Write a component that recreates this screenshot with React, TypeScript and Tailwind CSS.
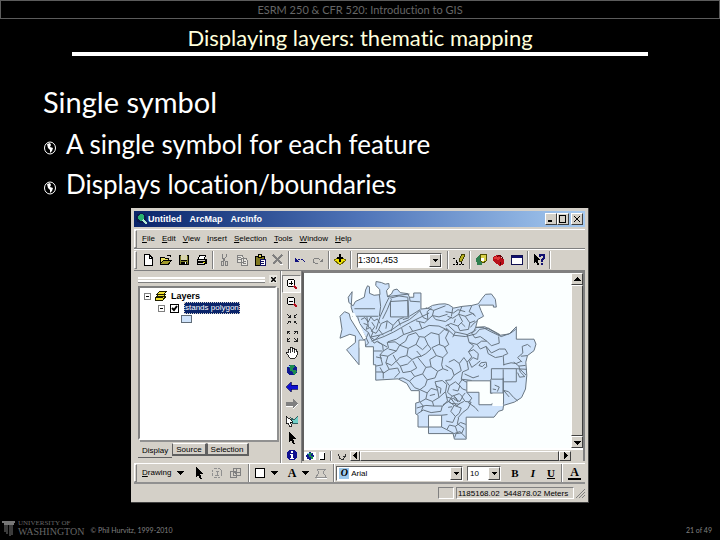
import React from "react";

type IconProps = { children: React.ReactNode; size?: string };

function Icon({ children, size = "w-3 h-3" }: IconProps) {
  return (
    <svg viewBox="0 0 12 12" className={`${size} shrink-0`} fill="none" shapeRendering="crispEdges" aria-hidden="true">
      {children}
    </svg>
  );
}

function Tool({ label, children }: { label: string; children: React.ReactNode }) {
  return (
    <button type="button" aria-label={label} className="flex h-[18px] w-[18px] shrink-0 items-center justify-center">
      <Icon>{children}</Icon>
    </button>
  );
}

function Separator() {
  return <div className="mx-px h-[18px] w-[2px] shrink-0 border-l border-r border-l-[#808080] border-r-white" />;
}

function Grip() {
  return <div className="mr-[2px] h-[18px] w-[3px] shrink-0 border border-white border-r-[#808080] border-b-[#808080]" />;
}

function Caret({ label }: { label: string }) {
  return (
    <button type="button" aria-label={label} className="flex h-[18px] w-3 shrink-0 items-center justify-center">
      <svg viewBox="0 0 7 4" className="h-1 w-[7px]" shapeRendering="crispEdges">
        <path d="M0 0H7L3.5 4Z" fill="#000" />
      </svg>
    </button>
  );
}

type ComboProps = { label: string; value: string; width: string; text: string };

function Combo({ label, value, width, text }: ComboProps) {
  return (
    <div className={`relative h-[15px] shrink-0 border border-[#606060] border-r-white border-b-white bg-white ${width}`}>
      <select aria-label={label} className={`block h-[13px] w-full appearance-none leading-[13px] text-black outline-none ${text}`}>
        <option>{value}</option>
      </select>
      <span className="pointer-events-none absolute top-0 right-0 flex h-[13px] w-3 items-center justify-center border border-white border-r-[#404040] border-b-[#404040] bg-[#d4d0c8]">
        <svg viewBox="0 0 5 3" className="h-[3px] w-[5px]" shapeRendering="crispEdges">
          <path d="M0 0H5L2.5 3Z" fill="#000" />
        </svg>
      </span>
    </div>
  );
}

function WindowButton({ label, d }: { label: string; d: string }) {
  return (
    <button
      type="button"
      aria-label={label}
      className="flex h-3 w-3 items-center justify-center border border-white border-r-[#404040] border-b-[#404040] bg-[#d4d0c8]"
    >
      <svg viewBox="0 0 8 8" className="h-2 w-2" fill="none" stroke="#000" shapeRendering="crispEdges">
        <path d={d} />
      </svg>
    </button>
  );
}

function ArrowButton({ label, d, size }: { label: string; d: string; size: string }) {
  return (
    <button
      type="button"
      aria-label={label}
      className={`flex shrink-0 items-center justify-center border border-white border-r-[#404040] border-b-[#404040] bg-[#d4d0c8] ${size}`}
    >
      <svg viewBox="0 0 7 7" className="h-[7px] w-[7px]" shapeRendering="crispEdges">
        <path d={d} fill="#000" />
      </svg>
    </button>
  );
}

function Globe() {
  return (
    <>
      <circle cx="6" cy="6" r="5.5" fill="#101a90" />
      <path d="M4 1h4l1 2-2 1v2h2l2 1-1 3-2 1-1-3-3-1V4L2 3z" fill="#1c8a50" />
      <path d="M2 2h2v1H2z" fill="#8fd0ff" />
    </>
  );
}

function Pointer() {
  return <path d="M3 0v10l2-2 2 4h2L7 7h3z" fill="#000" />;
}

function TitleBar() {
  return (
    <div className="flex h-4 items-center bg-linear-to-r from-[#0a246a] via-[#4f74b8] to-[#a6caf0] pr-[2px] pl-[2px]">
      <Icon>
        <circle cx="5" cy="5" r="5" fill="#0a1a50" />
        <path d="M2 3l3-2 3 1v3L5 8 2 6z" fill="#28b070" />
        <path d="M7 7l4 4" stroke="#b0e8d0" strokeWidth="2" />
      </Icon>
      <h2 className="flex flex-1 gap-2 text-[9px] leading-4 font-bold text-white">
        <span>Untitled</span>
        <span>ArcMap</span>
        <span>ArcInfo</span>
      </h2>
      <WindowButton label="Minimize" d="M1 6.5h4M1 5.500h4" />
      <WindowButton label="Maximize" d="M0 .5h7M.5 1v6h6V1" />
      <span className="w-[2px]" />
      <WindowButton label="Close" d="M1 1l6 6M7 1L1 7" />
    </div>
  );
}

const menus = ["File", "Edit", "View", "Insert", "Selection", "Tools", "Window", "Help"];

function MenuBar() {
  return (
    <div className="mt-[2px] flex h-5 items-center border-t border-b border-t-white border-b-[#808080]">
      <Grip />
      <nav className="ml-[3px] flex gap-[7px] text-[8px] leading-3 text-black">
        {menus.map((name) => (
          <button type="button" key={name}>
            <u>{name[0]}</u>
            {name.slice(1)}
          </button>
        ))}
      </nav>
    </div>
  );
}

function ToolBar() {
  return (
    <div className="flex h-[22px] items-center border-t border-b border-t-white border-b-[#808080]">
      <Grip />
      <Tool label="New">
        <path d="M2 .5h5l3 3v8H2z" fill="#fff" stroke="#000" />
        <path d="M7 0v4h3" stroke="#000" />
      </Tool>
      <Tool label="Open">
        <path d="M0 3h4l1 1h4v2h3l-3 5H0z" fill="#000" />
        <path d="M1 4h3l1 1h3v1H3L1 9z" fill="#e8e060" />
        <path d="M3 7h7l-2 3H1z" fill="#a09828" />
        <path d="M7 1h3v2" stroke="#000" />
      </Tool>
      <Tool label="Save">
        <path d="M1 1h10v10H1z" fill="#000" />
        <path d="M3 1h6v5H3z" fill="#d8d4b0" />
        <path d="M2 2h1v8H2zM9 2h1v8H9zM3 7h6v1H3z" fill="#80802a" />
        <path d="M7 8h1v2H7z" fill="#fff" />
      </Tool>
      <Tool label="Print">
        <path d="M4 1h6L8 5H2z" fill="#fff" stroke="#000" />
        <path d="M1 5h10v5H9v1H1z" fill="#000" />
        <path d="M2 6h7v1H2zM2 9h6v1H2z" fill="#d4d0c8" />
        <path d="M7 8h2v1H7z" fill="#e0d800" />
      </Tool>
      <Separator />
      <Tool label="Cut">
        <path d="M4 0v3l3 4M8 0v3L5 7" stroke="#808080" />
        <path d="M3 7h2v4H3zM7 7h2v4H7z" stroke="#808080" />
      </Tool>
      <Tool label="Copy">
        <path d="M1 1h5l1 2v5H1zM5 4h5l1 2v5H5z" fill="#e8e6e0" stroke="#808080" />
        <path d="M2 3h3M2 5h3M7 7h3M7 9h3" stroke="#808080" />
      </Tool>
      <Tool label="Paste">
        <path d="M1 2h9v9H1z" fill="#807820" stroke="#000" />
        <path d="M4 0h3v3H4z" fill="#e0d860" stroke="#000" />
        <path d="M6 5h5v6H6z" fill="#fff" stroke="#101060" />
        <path d="M7 7h3M7 9h3" stroke="#101060" />
      </Tool>
      <Tool label="Delete">
        <path d="M1 1l9 9M10 1L1 10" stroke="#808080" strokeWidth="1.5" />
        <path d="M8 10h3" stroke="#fff" />
      </Tool>
      <Separator />
      <Tool label="Undo">
        <path d="M1 4v4h4L3 6z" fill="#101080" />
        <path d="M4 6l2-1h3l1 2v2" stroke="#101080" strokeDasharray="2 1" />
      </Tool>
      <Tool label="Redo">
        <path d="M11 4v4H7l2-2z" fill="#808080" />
        <path d="M8 6L6 4H3L1 6v2l2 1h3" stroke="#808080" />
      </Tool>
      <Separator />
      <Tool label="Add Data">
        <path d="M0 6l6-3 6 3-6 5z" fill="#f0e000" stroke="#706800" />
        <path d="M5 0h2v3h2v2H7v3H5V5H3V3h2z" fill="#000" />
      </Tool>
      <Separator />
      <div className="mx-1">
        <Combo label="Map scale" value="1:301,453" width="w-[85px]" text="text-[9px]" />
      </div>
      <Separator />
      <Tool label="Editor Toolbar">
        <path d="M0 4l3 2 2 4M0 10h11M3 7v4M8 10V6" stroke="#000" strokeDasharray="2 1" />
        <path d="M6 6l3-6 3 1-3 6-3 1z" fill="#b8b020" stroke="#404000" />
      </Tool>
      <Separator />
      <Tool label="ArcCatalog">
        <path d="M1 4l4-3 3 3-1 7H2z" fill="#308050" />
        <path d="M5 0h6v7L8 9 5 6z" fill="#d8d048" stroke="#505000" />
        <path d="M6 4h3v3H6z" fill="#fff" />
      </Tool>
      <Tool label="ArcToolbox">
        <path d="M0 3l4-2 7 4v5l-4 2-7-5z" fill="#b81018" />
        <path d="M0 4l4-2 4 2-3 2z" fill="#e03838" />
        <path d="M7 8v3M4 3l2-2 3 2v2" stroke="#600008" />
      </Tool>
      <Tool label="Command Line">
        <path d="M.5 1.5h11v9H.5z" fill="#fff" stroke="#101050" />
        <path d="M1 2h10v2H1z" fill="#101070" />
      </Tool>
      <Separator />
      <Tool label="What's This?">
        <path d="M1 0v9l2-2 1 4h2L5 6h2z" fill="#000" />
        <path d="M7 3V1h4v3L9 6v2M9 9v2" stroke="#101070" strokeWidth="1.5" />
      </Tool>
      <Separator />
    </div>
  );
}

function Expander() {
  return (
    <button type="button" aria-label="Collapse" className="flex h-[7px] w-[7px] items-center justify-center border border-[#808080] bg-white">
      <span className="h-px w-[3px] bg-black" />
    </button>
  );
}

function Contents() {
  return (
    <section className="flex w-[147px] shrink-0 flex-col pt-1 pr-1 pl-1">
      <div className="flex h-2 items-center gap-1">
        <div className="h-[5px] flex-1 border-t-2 border-b-2 border-white shadow-[0_1px_0_#808080]" />
        <button type="button" aria-label="Close contents" className="flex h-2 w-2 items-center justify-center bg-[#e8e6e0]">
          <svg viewBox="0 0 5 5" className="h-[5px] w-[5px]" stroke="#000" strokeWidth="1.5">
            <path d="M0 0l5 5M5 0L0 5" />
          </svg>
        </button>
      </div>
      <div className="mt-[3px] flex-1 border-2 border-[#808080] border-r-white border-b-white bg-white pt-[2px] text-black shadow-[2px_2px_0_#909090]">
        <div className="flex h-3 items-center gap-1 pl-1">
          <Expander />
          <svg viewBox="0 0 12 10" className="h-[10px] w-3" shapeRendering="crispEdges">
            <path d="M0 8l4-3h7l-3 4H0zM1 6l3-3h7L8 6zM2 3l3-3h7L9 3z" fill="#f0e030" stroke="#202000" />
          </svg>
          <span className="text-[9px] leading-3 font-bold">Layers</span>
        </div>
        <div className="flex h-3 items-center gap-[5px] pl-[18px]">
          <Expander />
          <label className="flex items-center gap-[5px]">
            <span className="relative flex h-[9px] w-[9px]">
              <input type="checkbox" defaultChecked className="peer h-[9px] w-[9px] appearance-none border border-black bg-white" />
              <svg viewBox="0 0 9 9" className="pointer-events-none absolute inset-0 hidden h-[9px] w-[9px] peer-checked:block" fill="none" stroke="#000" strokeWidth="2">
                <path d="M2 4l2 2 3-4" />
              </svg>
            </span>
            <span className="border border-dotted border-[#d4d0c8] bg-[#0a246a] text-[8px] leading-[10px] text-white">stands polygon</span>
          </label>
        </div>
        <div className="mt-px ml-[41px] h-2 w-[11px] border border-[#606c78] bg-[#cfe3fb]" />
      </div>
      <div className="flex h-[23px] items-start pt-[3px] text-[8px] leading-[11px] text-black">
        <button type="button" className="mt-px h-[14px] border-b border-[#606060] pr-1 pl-1">Display</button>
        <button type="button" className="h-[13px] border border-[#606060] border-r-2 border-b-2 border-t-white pr-[3px] pl-[3px]">Source</button>
        <button type="button" className="h-[13px] border border-[#606060] border-r-2 border-b-2 border-t-white pr-[3px] pl-[3px]">Selection</button>
      </div>
    </section>
  );
}

function MapTools() {
  return (
    <div className="flex w-[21px] shrink-0 flex-col items-center border-r border-l border-r-[#808080] border-l-white pt-1 shadow-[-1px_0_0_#808080]">
      <div className="border border-[#808080] border-r-white border-b-white bg-[#eceae6]">
        <button type="button" aria-label="Zoom In" className="flex h-4 w-[17px] items-center justify-center">
          <Icon>
            <circle cx="5" cy="5" r="4" fill="#fff" stroke="#000" />
            <path d="M3 5h4M5 3v4" stroke="#000" />
            <path d="M8 8l3 3" stroke="#b01020" strokeWidth="2" />
          </Icon>
        </button>
      </div>
      <div className="flex flex-col *:h-[17px]">
        <Tool label="Zoom Out">
          <circle cx="5" cy="5" r="4" fill="#f4f4f4" stroke="#000" />
          <path d="M3 5h4" stroke="#000" />
          <path d="M8 8l3 3" stroke="#b01020" strokeWidth="2" />
        </Tool>
        <Tool label="Fixed Zoom In">
          <path d="M1 1l3 3M4 2v2H2M11 1L8 4M8 2v2h2M1 11l3-3M4 10V8H2M11 11L8 8M8 10V8h2" stroke="#202020" />
        </Tool>
        <Tool label="Fixed Zoom Out">
          <path d="M1 4V1h3M1 1l3 3M11 4V1H8M11 1L8 4M1 8v3h3M1 11l3-3M11 8v3H8M11 11L8 8" stroke="#202020" />
        </Tool>
        <Tool label="Pan">
          <path d="M0 5l2 1V2h2V0h2v1h2v1h2v2h1v4l-2 3H4z" fill="#fff" stroke="#000" strokeWidth=".8" />
          <path d="M4 2v4M6 1v4M8 2v4" stroke="#000" strokeWidth=".8" />
        </Tool>
        <Tool label="Full Extent">
          <Globe />
        </Tool>
        <Tool label="Previous Extent">
          <path d="M0 6l5-5v3h7v4H5v3z" fill="#1010d0" stroke="#000050" strokeWidth=".7" />
        </Tool>
        <Tool label="Next Extent">
          <path d="M12 6L7 1v3H0v4h7v3z" fill="#808080" />
          <path d="M7 11l5-5M0 8.5h7" stroke="#fff" />
        </Tool>
        <Tool label="Select Features">
          <path d="M5 3l3 2 4-4v7H6z" fill="#70d0c8" stroke="#306060" />
          <path d="M0 1v8l2-1 2 4 2-1-2-4h3z" fill="#fff" stroke="#000" strokeWidth=".8" />
        </Tool>
        <Tool label="Select Elements">
          <Pointer />
        </Tool>
        <Tool label="Identify">
          <circle cx="6" cy="6" r="5.5" fill="#101090" />
          <path d="M5 2h2v2H5zM4 5h3v4h1v1H4V9h1V6H4z" fill="#fff" />
        </Tool>
      </div>
    </div>
  );
}

const outline =
  "M155 75L143 92L145 108L158 118L165 105L180 98L192 92L196 70L202 57L208 60L208 80L222 86L240 84L239 68L227 56L228 44L244 47L256 52L267 50L268 62L260 72L263 90L275 82L281 70L292 67L302 78L325 81L330 92L343 92L343 79L365 79L365 128L385 126L400 117L420 113L438 112L450 115L465 125L490 120L520 117L540 112L552 95L562 83L580 82L592 98L595 122L586 122L586 116L542 116L548 132L556 150L538 160L532 184L560 182L585 196L606 208L634 204L656 182L656 220L710 220L716 235L710 255L690 270L685 290L688 330L684 372L672 398L650 412L617 422L615 436L602 440L588 458L503 458L503 525L467 525L463 508L388 508L388 488L356 488L356 452L349 448L349 415L360 412L360 377L335 377L322 355L295 341L227 345L227 298L220 298L220 243L196 243L194 223L176 223L176 298L138 252L165 230L165 210L148 205L118 217L124 190L118 150L132 136L146 142L150 158L190 222L198 218L160 148L152 122Z";

const parcels = [
  "M155 150H235M162 127H225M238 84L242 120L238 150M268 92L258 112L240 152L228 190M275 98L262 130L248 158M270 95L298 88L325 92L328 155L310 160M272 105V152H325V102L272 105M330 92L332 104L362 106M330 150L362 130M262 90L330 82",
  "M172 152L178 172L190 188L205 200L212 218M182 160L194 154L204 168L212 152L222 164L232 158L240 172M190 172L202 176L198 190L210 184L218 200L212 215L224 222L240 208M200 152L205 184M215 168L224 182L214 196L228 202L236 190M205 200L198 216L205 232L196 240M212 218L222 232L232 226L246 236",
  "M210 214L245 206L278 190L300 174L330 160L352 142L365 130M214 226L252 212L282 198L306 184L334 168L362 154L390 140M250 208L236 190L244 172L262 164L258 188M262 164L280 178L274 196M280 178L296 160L312 154M296 160L302 178",
  "M362 134L372 154L386 160L384 136L398 124M350 164L376 170L400 148L420 152L446 144M380 124L404 132L440 118M404 132L400 148L410 160L440 166L460 152M360 168L368 188L340 196L312 206L290 220L264 228M368 188L390 178L420 180L446 192M312 206L306 186M340 196L330 180",
  "M232 228L248 236L250 256L240 268L248 298L228 302M220 256H246M228 274L246 278M250 256L266 246L262 230L286 228L300 238L290 256L266 250M240 268L264 272L280 262L290 256M264 272L258 292L276 300L290 286L280 268M258 292L268 312L250 324L240 306M268 312L294 308L300 322L284 338M248 236L262 244M228 320H250V340",
  "M300 238L318 226L326 208L350 200L360 214L350 236L326 248L300 238M350 236L370 252L386 236L376 214L360 212M386 236L396 250L380 264L366 272L352 256M326 248L322 270L338 282L354 274L366 272M322 270L300 276L290 288L302 302L324 296L338 282M302 302L310 322L334 318L352 308L340 286",
  "M334 318L346 334L370 326L380 306L354 274M370 326L384 344L408 338L416 318L396 304L380 306M396 304L392 282L412 270L400 248M412 270L432 276L446 262L436 242L420 236L398 246M416 318L432 310L448 316M432 276L428 298L432 310M346 334L330 348L310 338L298 340M330 348L346 368L362 374M384 344L378 362L362 374M376 214L396 200L420 206L436 190L450 196M420 206L422 236",
  "M450 196L440 216L450 236L436 246M446 150L462 156L480 144L500 150L522 142L532 150M462 125L458 150M490 120L480 144L492 166L478 180L456 172L440 180M500 150L514 170L530 164M514 170L510 190L484 194L478 180M520 118L512 136L528 144M446 176L470 198L506 206L526 196L532 184M442 186L466 208L500 212L532 204L544 190L570 186L606 206M470 198L462 214M506 206L512 230L526 240L510 258L520 274L506 290",
  "M440 136L464 140L478 130L500 136M470 158L466 170M488 170L500 182M536 164L524 174L516 184M532 184H554L576 196L610 212L638 202L654 190M534 190L520 202L530 216L546 212L566 226L580 240L604 232L602 212M512 230L536 236L546 250L564 242L580 262L604 250L622 250L630 264L616 270L618 300",
  "M510 258L526 252L540 264L538 282L524 276L512 288L520 306L534 296L546 286M506 290L510 312L492 320L488 342L520 346M560 296L552 304L542 300L548 292L564 290L566 304L556 310M564 242L570 264L592 276L614 272M536 236L550 226L566 226M440 300L460 312L466 330L456 344L440 346M466 330L488 316L482 294L496 276L506 290M482 294L466 282L450 290",
  "M616 298L640 292L656 294L670 288M674 290L660 276L676 262L674 242L690 236L700 244M690 270L670 272M648 290L664 302L684 300M580 310H656V350H616V312M580 310V342H616M578 342V385H616V350M616 338V422M590 360L604 366L598 380M584 372L594 374M656 310L688 312M664 302L668 320L682 334L666 336L660 322M668 312L686 330M616 376L632 380L648 398L660 408M617 376L634 396",
  "M505 382L520 400L510 414L530 428L540 440M488 342L505 352M500 384L490 396L500 410L518 412L508 432L492 444L478 460M490 344L480 358L492 372L504 376M542 332L524 338L498 326",
  "M362 374L384 384L380 402L362 412M380 402L400 410L420 398L416 376L396 370L384 384M416 376L408 350L430 346L444 358L440 380L420 398M400 410L404 424L432 424L446 408L440 380M352 430L380 422L404 424M354 448L372 436L396 444L426 440L430 424M362 412L372 424L366 440M410 362L426 370L424 386M392 392L408 388",
  "M440 346L452 362L446 382L460 394L450 410L466 422L456 440L470 456L462 474L442 470M452 362L470 350L484 362L478 378L462 374M460 394L482 386L492 396L484 410L466 404M446 408L458 416L480 418L496 410M466 422L488 430L482 446L470 456M450 410L432 420M456 404L470 398L478 412M448 428L460 426M442 396L456 400L474 424L484 416M464 392L476 404M428 452L446 450M428 488L444 496L452 482L470 486L486 474L502 480M444 496L466 508L484 502L502 520M470 486L476 504M480 460L476 478L496 492L490 506L472 508L468 520",
];

function MapView() {
  return (
    <div className="mb-[2px] flex min-w-0 flex-1 flex-col border-t-2 border-r-2 border-l-2 border-[#808080] border-l-[#606060]">
      <div className="flex min-h-0 flex-1">
        <svg viewBox="15 18 801 534" className="h-full min-w-0 flex-1 bg-[#fbffff]" role="img" aria-label="Map of stands" fill="none">
          <path d={outline} fill="#cfe3fb" stroke="#66737f" strokeWidth="3" strokeLinejoin="round" />
          <g stroke="#66737f" strokeWidth="3">
            {parcels.map((d, i) => (
              <path key={i} d={d} />
            ))}
          </g>
          <path d="M505 347H577V385H617V416H582V420H542V382H505ZM388 452H428V488H388Z" fill="#fbffff" stroke="#66737f" strokeWidth="3" />
          <path d="M583 386H615V424H583ZM178 225H193V246H178ZM150 138L162 140L198 216L190 220Z" fill="#fbffff" />
        </svg>
        <div className="flex w-3 shrink-0 flex-col bg-[#e4e1dc]">
          <ArrowButton label="Scroll up" d="M0 5h7L3.5 1z" size="h-3 w-full" />
          <div className="flex-1 border border-white border-r-[#404040] border-b-[#404040] bg-[#d4d0c8]" />
          <ArrowButton label="Scroll down" d="M0 2h7L3.5 6z" size="h-3 w-full" />
        </div>
      </div>
      <div className="flex h-[13px] items-center border-t-2 border-white bg-[#d4d0c8] pr-3">
        <button type="button" aria-label="Data view" className="flex w-3 justify-center bg-white">
          <Icon size="w-2 h-2">
            <Globe />
          </Icon>
        </button>
        <button type="button" aria-label="Layout view" className="flex w-3 justify-center">
          <Icon size="w-2 h-2">
            <path d="M2 0h8v12H2z" fill="#fff" />
            <path d="M10 1v10H3" stroke="#000" strokeWidth="2" />
          </Icon>
        </button>
        <div className="mx-[2px] h-[10px] w-[2px] border-r border-l border-r-white border-l-[#808080]" />
        <button type="button" aria-label="Refresh" className="flex w-4 justify-center">
          <Icon size="w-2 h-2">
            <path d="M1 3l1 6 3 2h3l2-3M11 3v5M7 6h5" stroke="#303030" strokeWidth="1.5" />
          </Icon>
        </button>
        <ArrowButton label="Scroll left" d="M5 0v7L1 3.5z" size="h-[10px] w-[10px]" />
        <div className="h-[10px] flex-1 border border-white border-r-[#404040] border-b-[#404040]" />
        <ArrowButton label="Scroll right" d="M2 0v7l4-3.5z" size="h-[10px] w-3" />
      </div>
    </div>
  );
}

function DrawingBar() {
  return (
    <div className="flex h-[21px] items-center border-t border-b-2 border-t-white border-b-[#909090] text-black">
      <Grip />
      <button type="button" className="ml-[3px] text-[8px] leading-3">
        <u>D</u>rawing
      </button>
      <span className="w-[3px]" />
      <Caret label="Drawing menu" />
      <span className="w-1" />
      <Tool label="Select">
        <Pointer />
      </Tool>
      <Tool label="Rotate">
        <circle cx="6" cy="6" r="5" stroke="#909090" strokeDasharray="3 1" />
        <path d="M5 4h3M6 4v4M4 8h4" stroke="#909090" />
      </Tool>
      <Tool label="Zoom to Selected">
        <path d="M1 4h6v6H1zM4 1h7v7H4zM4 4l4 4M7 1v7M4 5h7" stroke="#808080" />
      </Tool>
      <span className="w-[3px]" />
      <Separator />
      <Tool label="Shape">
        <path d="M1.5 1.5h9v9h-9z" fill="#fff" stroke="#000" />
      </Tool>
      <Caret label="Shape menu" />
      <button type="button" aria-label="Text" className="ml-1 w-4 font-['Liberation_Serif'] text-xs leading-3 font-bold">A</button>
      <Caret label="Text menu" />
      <Tool label="Edit Vertices">
        <path d="M2 2h9L8 5l3 5H1l3-4z" stroke="#909090" />
        <path d="M2 11h10" stroke="#fff" />
      </Tool>
      <span className="w-[3px]" />
      <Separator />
      <div className="relative flex">
        <Combo label="Font" value="Arial" width="w-[127px]" text="pl-[14px] text-[8px]" />
        <span className="pointer-events-none absolute top-[2px] left-[3px] flex h-[11px] w-[10px] items-center justify-center bg-[#9cc8ec] font-['Liberation_Serif'] text-[10px] leading-[10px] font-bold italic">
          O
        </span>
      </div>
      <span className="w-1" />
      <Combo label="Font size" value="10" width="w-[34px]" text="pl-[2px] text-[8px]" />
      <div className="ml-[5px] flex font-['Liberation_Serif'] text-[11px] leading-3 font-bold">
        <button type="button" aria-label="Bold" className="w-[18px]">B</button>
        <button type="button" aria-label="Italic" className="w-[18px] italic">I</button>
        <button type="button" aria-label="Underline" className="w-[18px] underline">U</button>
      </div>
      <Separator />
      <button type="button" aria-label="Font color" className="mx-1 w-[14px] border-b-2 border-black font-['Liberation_Serif'] text-xs leading-[11px] font-bold">A</button>
    </div>
  );
}

function StatusBar() {
  return (
    <div className="flex h-[18px] items-center justify-end gap-[2px] text-[8px] leading-[11px] text-black">
      <div className="h-3 w-4 border border-[#808080] border-r-white border-b-white" />
      <div className="flex h-3 w-[118px] gap-1 border border-[#808080] border-r-white border-b-white pl-px whitespace-nowrap">
        <span>1185168.02</span>
        <span>544878.02 Meters</span>
      </div>
      <svg viewBox="0 0 9 9" className="h-[9px] w-[9px]" stroke="#808080">
        <path d="M0 9l9-9M3 9l6-6M6 9l3-3" />
      </svg>
    </div>
  );
}

function ArcMapWindow() {
  return (
    <section className="mx-auto flex w-full max-w-[458px] flex-col border-r border-b border-[#404040] bg-[#d4d0c8] px-[3px] pt-[3px] font-['Liberation_Sans',sans-serif]">
      <TitleBar />
      <MenuBar />
      <ToolBar />
      <div className="flex h-[192px]">
        <Contents />
        <MapTools />
        <MapView />
      </div>
      <DrawingBar />
      <StatusBar />
    </section>
  );
}

const bullets = ["A single symbol for each feature", "Displays location/boundaries"];

function Bullet({ text }: { text: string }) {
  return (
    <li className="flex items-center gap-[9px]">
      <svg viewBox="0 0 14 14" className="mt-2 h-[14px] w-[14px]" fill="none" aria-hidden="true">
        <ellipse cx="7" cy="7" rx="5.5" ry="6" stroke="#fff" />
        <path d="M4 3l3-1 1 2-1 2 3 1-1 3-2 2V9L5 7z" fill="#fff" />
      </svg>
      <span>{text}</span>
    </li>
  );
}

export default function App() {
  return (
    <div className="flex min-h-screen flex-col bg-black font-['Lato',sans-serif] text-white [font-variant-ligatures:none]">
      <header className="border border-[#5c5c5c] text-center text-[11px] leading-[17px] text-[#666666]">
        ESRM 250 &amp; CFR 520: Introduction to GIS
      </header>
      <h1 className="mx-[10%] border-b-4 border-white pt-[5px] text-center text-[22px] leading-7 text-[#ffffdc]">
        Displaying layers: thematic mapping
      </h1>
      <main className="flex-1 pt-[26px]">
        <div className="px-[43px]">
          <p className="pb-[2px] text-[29px] leading-10">Single symbol</p>
          <ul className="text-[26px] leading-10">
            {bullets.map((text) => (
              <Bullet key={text} text={text} />
            ))}
          </ul>
        </div>
        <div className="pt-1">
          <ArcMapWindow />
        </div>
      </main>
      <footer className="flex items-center px-[2px] pb-[3px] text-[7px] leading-[10px] text-[#808080]">
        <svg viewBox="0 0 14 16" className="h-4 w-[14px]" fill="none" aria-hidden="true">
          <path d="M0 2h13M2 4h10" stroke="#777" strokeWidth="2" />
          <path d="M3 5v7M5 5v9M8 5v11M10 5v10" stroke="#777" />
        </svg>
        <div className="ml-[2px] font-['Liberation_Serif',serif] text-[#666666]">
          <div className="text-[7px] leading-[8px]">UNIVERSITY OF</div>
          <div className="text-[10px] leading-[10px]">WASHINGTON</div>
        </div>
        <p className="ml-[6px] flex-1 pt-1">© Phil Hurvitz, 1999-2010</p>
        <p className="mr-[6px] pt-1">21 of 49</p>
      </footer>
    </div>
  );
}
